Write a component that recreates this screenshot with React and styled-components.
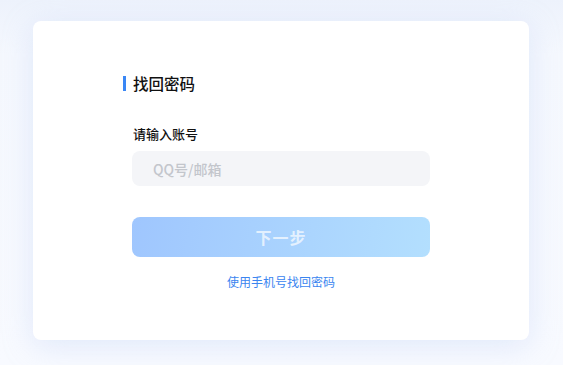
import React from 'react';
import styled, { createGlobalStyle } from 'styled-components';

const GlobalStyle = createGlobalStyle`
  html, body {
    margin: 0;
    padding: 0;
  }
  body {
    background: #f7f9fe;
    font-family: "Noto Sans CJK SC", "Noto Sans", sans-serif;
  }
`;

const Page = styled.div`
  width: 563px;
  height: 365px;
  box-sizing: border-box;
  padding: 21px 34px 25px 33px;
  background: linear-gradient(180deg, #edf2fc 0%, #f5f8fe 15%, #f8faff 100%);
  overflow: hidden;
`;

const Card = styled.div`
  height: 319px;
  box-sizing: border-box;
  background: #fff;
  border-radius: 8px;
  box-shadow: 0 6px 30px rgba(180, 200, 240, 0.35);
  padding: 53px 99px 0 90px;
`;

const Title = styled.h2`
  margin: 0;
  display: flex;
  align-items: center;
  gap: 7px;
  font-size: 15.5px;
  font-weight: 500;
  color: #111;
  line-height: 18px;
  &::before {
    content: '';
    width: 3px;
    height: 15px;
    background: #3a87f5;
  }
`;

const Form = styled.div`
  padding: 33px 0 0 9px;
  display: flex;
  flex-direction: column;
`;

const Label = styled.label`
  font-size: 13px;
  font-weight: 500;
  color: #111;
  line-height: 18px;
  padding-left: 1px;
`;

const Input = styled.input`
  margin-top: 8px;
  height: 35px;
  box-sizing: border-box;
  border: none;
  outline: none;
  background: #f4f5f8;
  border-radius: 8px;
  padding: 0 21px;
  font-family: inherit;
  font-size: 14px;
  font-weight: 500;
  color: #333;
  &::placeholder {
    color: #c3c6cc;
  }
`;

const Button = styled.button`
  margin-top: 31px;
  height: 40px;
  border: none;
  border-radius: 8px;
  background: linear-gradient(100deg, #9fc6fe 0%, #b3dffe 100%);
  color: rgba(255, 255, 255, 0.7);
  font-family: inherit;
  font-size: 16px;
  font-weight: 700;
  letter-spacing: 1px;
  cursor: not-allowed;
`;

const Link = styled.a`
  margin-top: 16px;
  align-self: center;
  font-size: 12px;
  color: #3a85f0;
  text-decoration: none;
  line-height: 18px;
`;

export default function App() {
  return (
    <>
      <GlobalStyle />
      <Page>
        <Card>
          <Title>找回密码</Title>
          <Form>
            <Label>请输入账号</Label>
            <Input placeholder="QQ号/邮箱" />
            <Button disabled>下一步</Button>
            <Link href="#">使用手机号找回密码</Link>
          </Form>
        </Card>
      </Page>
    </>
  );
}
